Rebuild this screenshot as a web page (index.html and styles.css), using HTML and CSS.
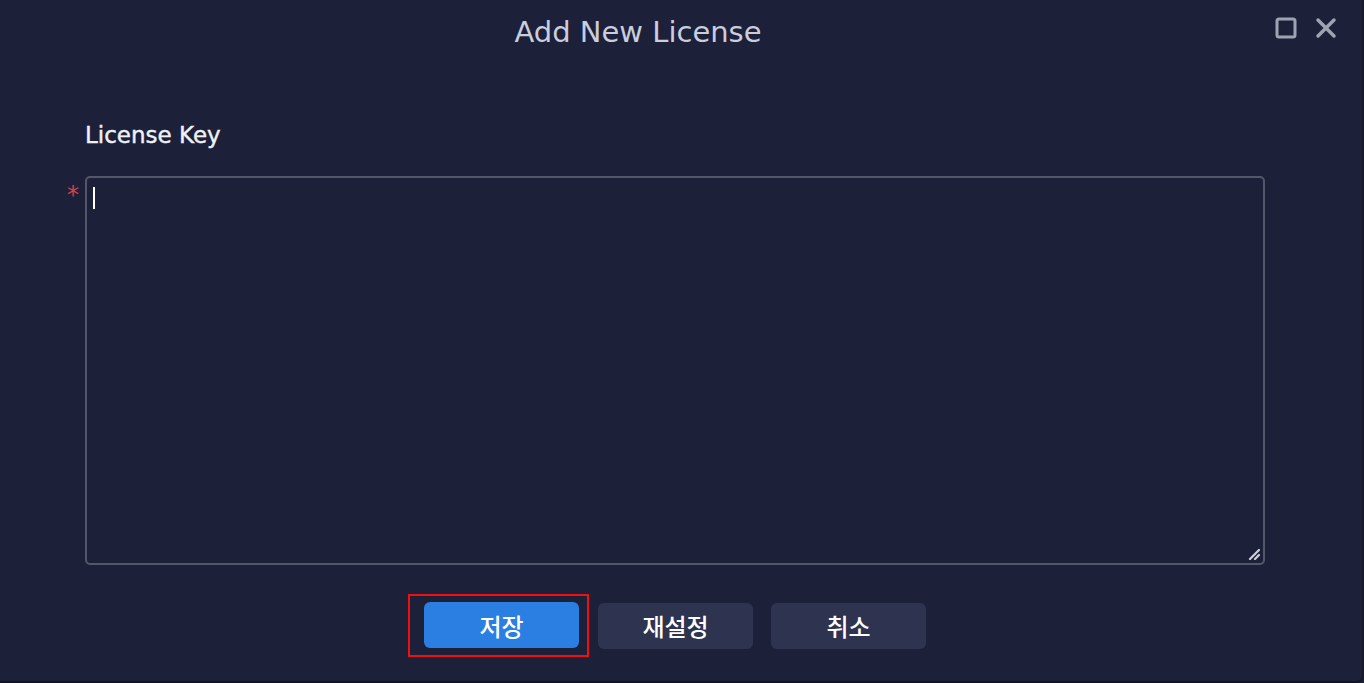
FILE: index.html
```html
<!DOCTYPE html>
<html>
<head>
<meta charset="utf-8">
<link rel="stylesheet" href="styles.css">
</head>
<body>
<div class="dialog">
  <header class="titlebar">
    <h1 class="title">Add New License</h1>
    <div class="win-controls">
      <svg class="icon" width="24" height="24" viewBox="0 0 24 24"><rect x="3" y="3" width="18" height="18" rx="2" fill="none" stroke="#9ea3b3" stroke-width="3"/></svg>
      <svg class="icon" width="24" height="24" viewBox="0 0 24 24"><path d="M4 4 L20 20 M20 4 L4 20" stroke="#9ea3b3" stroke-width="3.5" stroke-linecap="round"/></svg>
    </div>
  </header>
  <main class="body">
    <label class="field-label">License Key</label>
    <div class="field-row">
      <span class="required">*</span>
      <div class="textarea">
        <span class="caret"></span>
        <svg class="grip" width="12" height="12" viewBox="0 0 12 12"><path d="M2 11 L11 2 M7 11 L11 7" stroke="#d0d3dc" stroke-width="2.2" stroke-linecap="round"/></svg>
      </div>
    </div>
    <div class="actions">
      <div class="highlight"><button class="btn primary">저장</button></div>
      <button class="btn secondary">재설정</button>
      <button class="btn secondary">취소</button>
    </div>
  </main>
</div>
</body>
</html>
```

FILE: styles.css
```css
html, body {
  margin: 0;
  padding: 0;
  background: #1c2039;
}
.dialog {
  width: 1364px;
  height: 683px;
  box-sizing: border-box;
  background: #1c2039;
  border-bottom: 2px solid #12141f;
  border-right: 2px solid #171a2c;
  border-bottom-right-radius: 8px;
  display: flex;
  flex-direction: column;
  font-family: "DejaVu Sans", Verdana, sans-serif;
  position: relative;
}
.titlebar {
  height: 64px;
  display: flex;
  justify-content: center;
  padding-right: 86px;
  position: relative;
}
.title {
  margin: 15px 0 0 0;
  font-size: 29px;
  line-height: normal;
  font-weight: normal;
  color: #c9cddd;
  font-family: "DejaVu Sans", Verdana, sans-serif;
}
.win-controls {
  position: absolute;
  top: 16px;
  right: 24px;
  display: flex;
  gap: 16px;
}
.body {
  padding: 58px 0 0 85px;
  display: flex;
  flex-direction: column;
}
.field-label {
  font-family: "DejaVu Sans", Verdana, sans-serif;
  font-weight: normal;
  font-size: 23px;
  color: #f0f1f5;
  line-height: 27px;
  -webkit-text-stroke: 0.4px #f0f1f5;
}
.field-row {
  margin-top: 27px;
  position: relative;
}
.required {
  position: absolute;
  left: -18px;
  top: 5px;
  color: #d8404a;
  font-size: 24px;
  font-family: "DejaVu Sans", sans-serif;
}
.textarea {
  width: 1180px;
  height: 389px;
  box-sizing: border-box;
  border: 2px solid #54576a;
  border-radius: 5px;
  position: relative;
}
.caret {
  position: absolute;
  left: 6px;
  top: 9px;
  width: 2px;
  height: 22px;
  background: #ffffff;
}
.grip {
  position: absolute;
  right: 3px;
  bottom: 3px;
}
.actions {
  display: flex;
  align-items: center;
  gap: 18px;
  padding-left: 323px;
  margin-top: 29px;
}
.highlight {
  border: 2px solid #ee1111;
  padding: 6px 8px 7px 14px;
  margin-right: -9px;
}
.btn {
  width: 155px;
  height: 46px;
  border: none;
  border-radius: 6px;
  font-family: "Noto Sans CJK KR", sans-serif;
  font-size: 24px;
  font-weight: 500;
  color: #ffffff;
  display: block;
  padding: 0;
}
.primary {
  background: #2b7fe2;
}
.secondary {
  background: #2e3450;
}
```
